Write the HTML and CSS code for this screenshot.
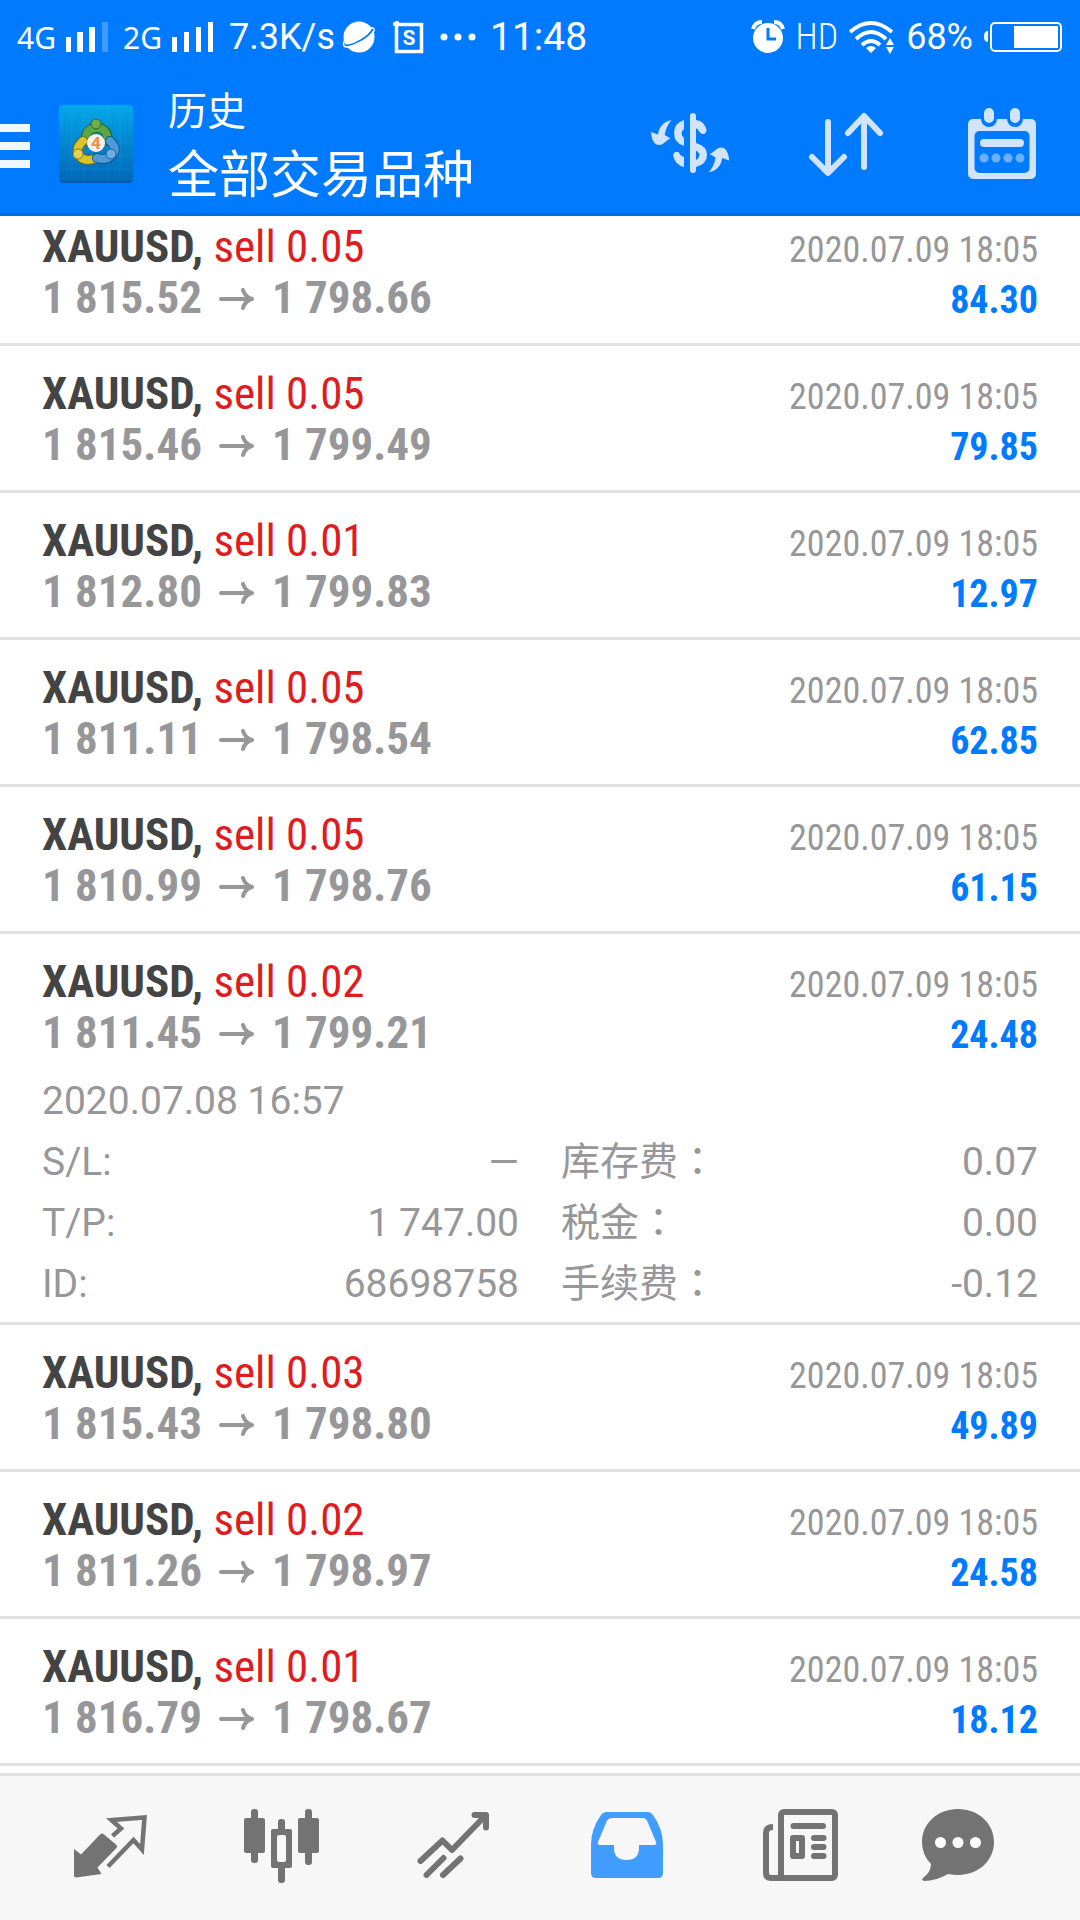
FILE: index.html
```html
<!DOCTYPE html>
<html lang="zh-CN">
<head>
  <meta charset="UTF-8">
  <meta name="viewport" content="width=device-width, initial-scale=1.0">
  <title>历史 - 全部交易品种</title>
  <link rel="stylesheet" href="styles.css">
</head>
<body>
  <div class="app">
    <header class="header">
      <div class="status">
        <span class="status-net">4G</span>
        <svg class="signal" width="44" height="34" viewBox="0 0 44 34" fill="#fff">
          <rect x="1" y="17" width="5" height="15"/><rect x="12" y="12" width="6" height="20"/><rect x="24" y="7" width="6" height="25"/><rect x="37" y="2" width="6" height="30" opacity=".25"/>
        </svg>
        <span class="status-net">2G</span>
        <svg class="signal" width="44" height="34" viewBox="0 0 44 34" fill="#fff">
          <rect x="1" y="17" width="5" height="15"/><rect x="13" y="12" width="5" height="20"/><rect x="25" y="7" width="5" height="25"/><rect x="37" y="2" width="5" height="30"/>
        </svg>
        <span class="status-speed">7.3K/s</span>
        <svg class="planet" width="34" height="34" viewBox="0 0 34 34">
          <circle cx="17" cy="17" r="15.500" fill="#fff"/>
          <path d="M31 8.500C28 16 12 26 3 25.500" fill="none" stroke="#007aff" stroke-width="2"/>
          <path d="M28 8q5-1 4 3Q28 18 17 23 4 29 2 26 1 24 2 21" fill="none" stroke="#fff" stroke-width="1.500"/>
        </svg>
        <svg class="sbox" width="32" height="34" viewBox="0 0 32 34">
          <path d="M4.500 4.500h25v27h-25zM1 4h5M5 1v5" fill="none" stroke="#fff" stroke-width="3.500"/>
          <text x="17" y="25" class="sbox-text">S</text>
        </svg>
        <svg class="dots" width="36" height="8" viewBox="0 0 36 8" fill="#fff"><circle cx="4" cy="4" r="3.500"/><circle cx="18" cy="4" r="3.500"/><circle cx="32" cy="4" r="3.500"/></svg>
        <time class="status-time">11:48</time>
        <div class="status-right">
          <svg width="34" height="34" viewBox="0 0 34 34">
            <circle cx="17" cy="18" r="15" fill="#fff"/>
            <path d="M2 9Q4 2 11 2M32 9Q30 2 23 2" fill="none" stroke="#fff" stroke-width="4"/>
            <path d="M17 8v11h8" fill="none" stroke="#007aff" stroke-width="3"/>
          </svg>
          <span class="status-hd">HD</span>
          <svg width="46" height="34" viewBox="0 0 46 34">
            <g fill="none" stroke="#fff" stroke-width="4"><path d="M1 12Q22-6 43 12"/><path d="M7 19Q22 5 37 19"/><path d="M13 25Q22 17 31 25"/></g>
            <path d="M17 28q5-4 10 0l-5 5zM41 18l4 7h-8zM41 34l4-7h-8z" fill="#fff"/>
          </svg>
          <span class="status-percent">68%</span>
          <svg width="80" height="34" viewBox="0 0 80 34">
            <rect x="7" y="3" width="70" height="28" rx="4" fill="none" stroke="#fff" stroke-width="2"/>
            <path d="M4 11v11q-4 0-4-5.500t4-5.500z" fill="#fff"/>
            <rect x="30" y="6" width="44" height="22" fill="#fff"/>
          </svg>
        </div>
      </div>

      <div class="toolbar">
        <button class="menu" aria-label="菜单"><span></span><span></span><span></span></button>
        <svg class="logo" width="76" height="78" viewBox="0 0 76 78">
          <defs>
            <linearGradient id="logoBg" x1="0" y1="0" x2="0" y2="1"><stop offset="0" stop-color="#04a8ea"/><stop offset=".5" stop-color="#0286cf"/><stop offset="1" stop-color="#0168b8"/></linearGradient>
          </defs>
          <rect x="1" y="3" width="74" height="75" rx="4" fill="#0759b0"/>
          <rect x="1" y="0" width="74" height="76" rx="4" fill="url(#logoBg)"/>
          <path d="M14 0v76M26 0v76M38 0v76M50 0v76M62 0v76M1 12h74M1 25h74M1 38h74M1 51h74M1 64h74" stroke="#4ab8e8" stroke-width="1" opacity=".15"/>
          <g fill="none" stroke-width="8" stroke-linecap="round">
            <path d="M28 36q-1-12 10-13t12 13" stroke="#1d5d3a" stroke-width="10"/>
            <path d="M28 36q-1-12 10-13t12 13" stroke="#58a846"/>
            <path d="M25 36q-8 7-4 14t15 4" stroke="#6d6a18" stroke-width="10"/>
            <path d="M25 36q-8 7-4 14t15 4" stroke="#d9c22c"/>
            <path d="M52 36q8 8 2 14t-15 3" stroke="#174f88" stroke-width="10"/>
            <path d="M52 36q8 8 2 14t-15 3" stroke="#4b9cd9"/>
          </g>
          <circle cx="38" cy="19" r="5" fill="#6fae4b" stroke="#2b6b36"/>
          <circle cx="20" cy="49" r="5" fill="#e4d050" stroke="#8a7a18"/>
          <circle cx="53" cy="49" r="5" fill="#6bb0e4" stroke="#1d5a96"/>
          <circle cx="38" cy="38" r="9" fill="#f4f1ea"/>
          <text x="38" y="44" class="logo-text">4</text>
        </svg>
        <div class="titles">
          <p class="subtitle">历史</p>
          <h1 class="title">全部交易品种</h1>
        </div>
        <button class="action" aria-label="货币">
          <svg width="96" height="96" viewBox="0 0 96 96">
            <path id="turn" d="M29.500 24C21 26 17 31 16 38.500L9 36C9.500 43 12 49 17 49S24 44 28.500 42.500L22.700 39C23.500 33 26 28 29.500 24z" fill="#d1e4fb"/>
            <use href="#turn" transform="rotate(180 48.100 50.300)"/>
            <path d="M51 20v54M54 29q6 1 7 6" class="stroke-light"/>
            <path d="M54 24q9 1 10.700 11-4 5-8 0-.7-2-2.700-3z" fill="#d1e4fb"/>
            <path d="M42 24v9q-5 4 0 9v8q-10-3-10-13t10-13zM54 47q11 3 11 12T54 71v-7q7-5 0-9.500zM42 61v10q-9-2-11-12 1.500-5 6-2.500 1 3 5 4.500z" fill="#d1e4fb"/>
          </svg>
        </button>
        <button class="action" aria-label="排序">
          <svg width="96" height="96" viewBox="0 0 96 96">
            <path d="M30 26v50M14 61l16 16 16-16M66 71V21M50 37l16-17 16 17" class="stroke-light"/>
          </svg>
        </button>
        <button class="action" aria-label="日期">
          <svg width="96" height="96" viewBox="0 0 96 96">
            <rect x="14" y="23" width="68" height="60" rx="5" fill="#d1e4fb"/>
            <rect x="20.500" y="35" width="55" height="42" rx="5" fill="#007aff"/>
            <path d="M35 18v5M61 18v5" stroke="#007aff" stroke-width="16" stroke-linecap="round"/>
            <path d="M35 17v5M61 17v5" stroke="#d1e4fb" stroke-width="10" stroke-linecap="round"/>
            <path d="M30 47h36" stroke="#d1e4fb" stroke-width="8" stroke-linecap="round"/>
            <g fill="#6cb0fd"><circle cx="30" cy="62" r="4.500"/><circle cx="42" cy="62" r="4.500"/><circle cx="54" cy="62" r="4.500"/><circle cx="66" cy="62" r="4.500"/></g>
          </svg>
        </button>
      </div>
    </header>

    <svg class="defs" width="0" height="0">
      <symbol id="arrow" viewBox="0 0 36 24"><path d="M2 11h30M24 2q2 7 9 9-7 2-9 9" fill="none" stroke="#97979a" stroke-width="4" stroke-linecap="round" stroke-linejoin="round"/></symbol>
    </svg>

    <main class="list">
      <article class="trade">
        <div class="line"><h2 class="symbol">XAUUSD, <span class="side">sell 0.05</span></h2><time class="closed">2020.07.09 18:05</time></div>
        <div class="line"><p class="prices">1 815.52<svg class="arrow"><use href="#arrow"/></svg>1 798.66</p><b class="profit">84.30</b></div>
      </article>
      <article class="trade">
        <div class="line"><h2 class="symbol">XAUUSD, <span class="side">sell 0.05</span></h2><time class="closed">2020.07.09 18:05</time></div>
        <div class="line"><p class="prices">1 815.46<svg class="arrow"><use href="#arrow"/></svg>1 799.49</p><b class="profit">79.85</b></div>
      </article>
      <article class="trade">
        <div class="line"><h2 class="symbol">XAUUSD, <span class="side">sell 0.01</span></h2><time class="closed">2020.07.09 18:05</time></div>
        <div class="line"><p class="prices">1 812.80<svg class="arrow"><use href="#arrow"/></svg>1 799.83</p><b class="profit">12.97</b></div>
      </article>
      <article class="trade">
        <div class="line"><h2 class="symbol">XAUUSD, <span class="side">sell 0.05</span></h2><time class="closed">2020.07.09 18:05</time></div>
        <div class="line"><p class="prices">1 811.11<svg class="arrow"><use href="#arrow"/></svg>1 798.54</p><b class="profit">62.85</b></div>
      </article>
      <article class="trade">
        <div class="line"><h2 class="symbol">XAUUSD, <span class="side">sell 0.05</span></h2><time class="closed">2020.07.09 18:05</time></div>
        <div class="line"><p class="prices">1 810.99<svg class="arrow"><use href="#arrow"/></svg>1 798.76</p><b class="profit">61.15</b></div>
      </article>
      <article class="trade open">
        <div class="line"><h2 class="symbol">XAUUSD, <span class="side">sell 0.02</span></h2><time class="closed">2020.07.09 18:05</time></div>
        <div class="line"><p class="prices">1 811.45<svg class="arrow"><use href="#arrow"/></svg>1 799.21</p><b class="profit">24.48</b></div>
        <div class="details">
          <time class="opened">2020.07.08 16:57</time>
          <dl class="facts">
            <div class="fact"><dt>S/L:</dt><dd>—</dd></div>
            <div class="fact"><dt>库存费<span class="colon" lang="zh-TW">：</span></dt><dd>0.07</dd></div>
            <div class="fact"><dt>T/P:</dt><dd>1 747.00</dd></div>
            <div class="fact"><dt>税金<span class="colon" lang="zh-TW">：</span></dt><dd>0.00</dd></div>
            <div class="fact"><dt>ID:</dt><dd>68698758</dd></div>
            <div class="fact"><dt>手续费<span class="colon" lang="zh-TW">：</span></dt><dd>-0.12</dd></div>
          </dl>
        </div>
      </article>
      <article class="trade">
        <div class="line"><h2 class="symbol">XAUUSD, <span class="side">sell 0.03</span></h2><time class="closed">2020.07.09 18:05</time></div>
        <div class="line"><p class="prices">1 815.43<svg class="arrow"><use href="#arrow"/></svg>1 798.80</p><b class="profit">49.89</b></div>
      </article>
      <article class="trade">
        <div class="line"><h2 class="symbol">XAUUSD, <span class="side">sell 0.02</span></h2><time class="closed">2020.07.09 18:05</time></div>
        <div class="line"><p class="prices">1 811.26<svg class="arrow"><use href="#arrow"/></svg>1 798.97</p><b class="profit">24.58</b></div>
      </article>
      <article class="trade">
        <div class="line"><h2 class="symbol">XAUUSD, <span class="side">sell 0.01</span></h2><time class="closed">2020.07.09 18:05</time></div>
        <div class="line"><p class="prices">1 816.79<svg class="arrow"><use href="#arrow"/></svg>1 798.67</p><b class="profit">18.12</b></div>
      </article>
    </main>

    <nav class="tabs">
      <a class="tab" href="#quotes" aria-label="行情">
        <svg width="96" height="96" viewBox="0 0 96 96">
          <path d="M12 49l7 5.500L38 34.500q2-2 4 0L54 44.500q2 2 0 4L35.500 67.500l4 6.500L14 77.500q-2 0-2-2z" fill="#737373"/>
          <path d="M50.500 36l8.500-7.500L49.500 20l33-2.500L80 49.500l-8.500-9.500L46 66.500" fill="none" stroke="#737373" stroke-width="4.500"/>
        </svg>
      </a>
      <a class="tab" href="#charts" aria-label="图表">
        <svg width="96" height="96" viewBox="0 0 96 96" fill="#737373">
          <rect x="10" y="18" width="21" height="35" rx="2"/><rect x="17" y="9" width="7" height="54" rx="3"/>
          <rect x="64" y="18" width="21" height="35" rx="2"/><rect x="71" y="9" width="7" height="56" rx="3"/>
          <rect x="37" y="29" width="21" height="39" rx="2"/><rect x="44" y="19" width="7" height="64" rx="3"/>
          <rect x="43" y="35" width="9" height="27" rx="2" fill="#f7f7f7"/>
        </svg>
      </a>
      <a class="tab" href="#trade" aria-label="交易">
        <svg width="96" height="96" viewBox="0 0 96 96" fill="none" stroke="#737373" stroke-width="6" stroke-linejoin="round">
          <path d="M14.500 61l22-20.500 9.500 9.500 33-34M68.500 15h11.500v12.500M20.500 75l17-17M37 75l17.500-16.500" stroke-linecap="round"/>
        </svg>
      </a>
      <a class="tab" href="#history" aria-label="历史" aria-current="page">
        <svg width="96" height="96" viewBox="0 0 96 96">
          <path d="M28 12h42q3 0 5 3 10 14 10 30v28q0 5-5 5H18q-5 0-5-5V45q0-16 10-30 2-3 5-3z" fill="#419dff"/>
          <path d="M34 18h31q3 0 4 2.500L78 42q1 3-2 3H61v3q0 12-12.500 12T36 48v-3H22q-3 0-2-3l9-21.500q1.500-2.500 5-2.500z" fill="#f7f7f7"/>
        </svg>
      </a>
      <a class="tab" href="#news" aria-label="新闻">
        <svg width="96" height="96" viewBox="0 0 96 96" fill="none" stroke="#737373" stroke-width="6">
          <rect x="31" y="12" width="54" height="66" rx="3"/>
          <path d="M23 27q-7 0-7 6v40q0 5 5 5h12"/>
          <path d="M43.500 26h29.500M64 38h9.500M64 47h9.500M64 56h9.500" stroke-linecap="round"/>
          <rect x="43" y="38" width="9" height="18" stroke-linejoin="round"/>
        </svg>
      </a>
      <a class="tab" href="#messages" aria-label="消息">
        <svg width="96" height="96" viewBox="0 0 96 96">
          <path d="M36 9c20 0 36 14 36 33S56 75 36 75q-5 0-10-1Q14 81 2 81q-3-1-1-3 8-6 8-14Q0 55 0 42C0 23 16 9 36 9z" fill="#737373"/>
          <g fill="#fff"><circle cx="18.500" cy="42.500" r="5.500"/><circle cx="36" cy="42.500" r="5.500"/><circle cx="53.500" cy="42.500" r="5.500"/></g>
        </svg>
      </a>
    </nav>
  </div>
</body>
</html>
```
FILE: styles.css
```css
* {
  box-sizing: border-box;
}

body {
  margin: 0;
  background-color: #fff;
  font-family: Roboto, "Noto Sans CJK SC", sans-serif;
}

h1, h2, p, dl, dd {
  margin: 0;
  font-weight: 400;
}

button {
  padding: 0;
  border: none;
  background: none;
  cursor: pointer;
}

svg {
  flex: none;
}

.app {
  display: flex;
  flex-direction: column;
  min-height: 100vh;
}

.defs {
  display: none;
}

/* Header */
.header {
  background-color: #007aff;
  border-bottom: 3px solid #066fe0;
  color: #fff;
}

.status {
  display: flex;
  align-items: center;
  height: 74px;
  padding: 0 16px 0 17px;
  white-space: nowrap;
}

.status-net {
  width: 48px;
  font-family: "Noto Sans", sans-serif;
  font-size: 30px;
}

.signal {
  margin-right: 14px;
}

.status-speed {
  width: 113px;
  font-size: 36px;
}

.sbox {
  margin-left: 16px;
}

.sbox-text {
  fill: #fff;
  font: bold 21px Roboto, sans-serif;
  text-anchor: middle;
}

.dots {
  margin: 0 14px 0 16px;
}

.status-time {
  font-size: 39px;
}

.status-right {
  display: flex;
  align-items: center;
  gap: 11px;
  margin-left: auto;
}

.status-hd {
  font-family: "Roboto Condensed", Roboto, sans-serif;
  font-size: 36px;
  font-weight: 300;
}

.status-percent {
  font-size: 36px;
}

.toolbar {
  display: flex;
  align-items: center;
  height: 139px;
}

.menu {
  display: flex;
  flex-direction: column;
  gap: 10px;
  width: 30px;
  padding-top: 4px;
}

.menu span {
  height: 8px;
  background-color: #f0f7ff;
}

.logo {
  margin: 0 34px 0 28px;
}

.logo-text {
  fill: #f08a4b;
  font: bold 17px Roboto, sans-serif;
  text-anchor: middle;
}

.titles {
  flex: 1;
  padding-top: 3px;
}

.subtitle {
  margin-bottom: 3px;
  font-size: 39px;
  line-height: 58px;
}

.title {
  font-size: 51px;
  line-height: 64px;
}

.action {
  width: 156px;
  height: 96px;
}

.stroke-light {
  fill: none;
  stroke: #d1e4fb;
  stroke-width: 6;
  stroke-linecap: round;
  stroke-linejoin: round;
}

/* Trades */
.list {
  flex: 1;
}

.trade {
  padding: 22px 42px 20px;
  border-bottom: 3px solid #e3e3e3;
  font-family: "Roboto Condensed", "Liberation Sans Narrow", Roboto, sans-serif;
}

.trade:first-child {
  padding-top: 5px;
}

.line {
  display: flex;
  justify-content: space-between;
  align-items: baseline;
  height: 51px;
  line-height: 51px;
  white-space: nowrap;
}

.symbol {
  color: #444;
  font-size: 45px;
  font-weight: 700;
}

.side {
  color: #df1c20;
  font-weight: 400;
}

.closed {
  color: #97979a;
  font-size: 36px;
}

.prices {
  color: #97979a;
  font-size: 45px;
  font-weight: 700;
}

.arrow {
  width: 36px;
  height: 24px;
  margin: 0 17px;
  vertical-align: 1px;
}

.profit {
  color: #007aff;
  font-size: 38px;
}

.open {
  padding-bottom: 7px;
}

.details {
  margin-top: 13px;
  color: #97979a;
  font-family: Roboto, "Noto Sans CJK SC", sans-serif;
  font-size: 39px;
  line-height: 61px;
}

.opened {
  display: block;
}

.facts {
  display: grid;
  grid-template-columns: 1fr 1fr;
  column-gap: 42px;
}

.fact {
  display: flex;
  justify-content: space-between;
  height: 61px;
}

.colon {
  font-family: "Noto Sans CJK TC", sans-serif;
  line-height: 1;
}

/* Bottom tabs */
.tabs {
  display: flex;
  padding: 0 24px;
  border-top: 3px solid #e3e3e3;
  background-color: #f7f7f7;
}

.tab {
  display: flex;
  flex: 1;
  justify-content: center;
  align-items: center;
  height: 144px;
}
```
